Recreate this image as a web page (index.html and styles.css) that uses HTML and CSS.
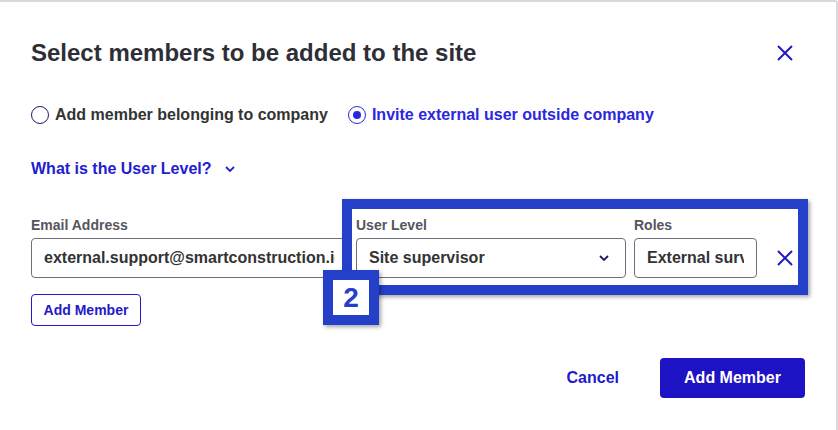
FILE: index.html
```html
<!DOCTYPE html>
<html lang="en">
<head>
    <meta charset="UTF-8">
    <meta name="viewport" content="width=device-width, initial-scale=1.0">
    <title>Select members</title>
    <link rel="stylesheet" href="styles.css">
</head>
<body>
    <div class="dialog">
        <!-- header -->
        <div class="dialog-header">
            <h2 class="dialog-title">Select members to be added to the site</h2>
            <button class="icon-btn" aria-label="Close">
                <svg width="16" height="16" viewBox="0 0 16 16"><path d="M1 1L15 15M15 1L1 15" stroke="currentColor" stroke-width="2" fill="none"/></svg>
            </button>
        </div>

        <!-- member type -->
        <div class="radio-group">
            <label class="radio"><span class="radio-mark"></span>Add member belonging to company</label>
            <label class="radio radio-checked"><span class="radio-mark"></span>Invite external user outside company</label>
        </div>

        <button class="level-link">What is the User Level?
            <svg width="10" height="6" viewBox="0 0 10 6"><path d="M1 1L5 5L9 1" stroke="currentColor" stroke-width="1.8" fill="none"/></svg>
        </button>

        <!-- member row -->
        <div class="member-row">
            <div class="field field-email">
                <div class="field-label">Email Address</div>
                <div class="input"><span class="input-text">external.support@smartconstruction.io</span></div>
            </div>
            <div class="field field-level">
                <div class="field-label">User Level</div>
                <div class="input input-select">
                    <span class="input-text">Site supervisor</span>
                    <svg width="10" height="6" viewBox="0 0 10 6"><path d="M1 1L5 5L9 1" stroke="currentColor" stroke-width="1.8" fill="none"/></svg>
                </div>
            </div>
            <div class="field field-roles">
                <div class="field-label">Roles</div>
                <div class="input"><span class="input-text">External surveyor</span></div>
            </div>
            <button class="icon-btn" aria-label="Remove">
                <svg width="16" height="16" viewBox="0 0 16 16"><path d="M1 1L15 15M15 1L1 15" stroke="currentColor" stroke-width="2" fill="none"/></svg>
            </button>
        </div>

        <button class="btn-outline">Add Member</button>

        <!-- footer -->
        <div class="dialog-footer">
            <button class="btn-text">Cancel</button>
            <button class="btn-primary">Add Member</button>
        </div>

        <!-- annotation -->
        <div class="callout"></div>
        <div class="callout-badge">2</div>
    </div>
</body>
</html>
```

FILE: styles.css
```css
/* base */
body {
    margin: 0;
    background: #fff;
    font-family: "Liberation Sans", Arial, sans-serif;
    font-weight: bold;
    color: #333;
}

button {
    font-family: inherit;
    font-weight: bold;
    background: none;
    border: none;
    padding: 0;
    cursor: pointer;
}

/* dialog */
.dialog {
    position: relative;
    box-sizing: border-box;
    width: 838px;
    height: 430px;
    border-top: 2px solid #d9d9dc;
    border-right: 2px solid #d9d9dc;
    border-top-right-radius: 3px;
    padding: 37px 31px 0 31px;
}

.dialog-header {
    display: flex;
    align-items: center;
    justify-content: space-between;
    height: 28px;
}

.dialog-title {
    margin: 0;
    font-size: 24px;
    line-height: 28px;
    color: #2e2e36;
}

.icon-btn {
    display: flex;
    align-items: center;
    justify-content: center;
    flex-shrink: 0;
    width: 40px;
    height: 40px;
    color: #2219c8;
}

/* radios */
.radio-group {
    display: flex;
    align-items: center;
    margin-top: 38px;
    height: 20px;
    font-size: 16px;
    line-height: 20px;
}

.radio {
    display: flex;
    align-items: center;
    gap: 6px;
    margin-right: 20px;
    color: #333;
}

.radio-mark {
    box-sizing: border-box;
    width: 18px;
    height: 18px;
    border: 1.5px solid #1f1b6e;
    border-radius: 50%;
    display: flex;
    align-items: center;
    justify-content: center;
}

.radio-checked {
    color: #2b27e0;
}

.radio-checked .radio-mark {
    border-color: #2b27e0;
}

.radio-checked .radio-mark::after {
    content: "";
    width: 8px;
    height: 8px;
    border-radius: 50%;
    background: #2b27e0;
}

/* link */
.level-link {
    display: flex;
    align-items: center;
    margin-top: 34px;
    font-size: 16px;
    line-height: 20px;
    color: #2220cf;
}

.level-link svg {
    margin-left: 13px;
}

/* member row */
.member-row {
    display: flex;
    align-items: flex-end;
    gap: 8px;
    margin-top: 37px;
}

.field {
    flex-shrink: 0;
}

.field-label {
    font-size: 14px;
    line-height: 18px;
    color: #55555f;
    margin-bottom: 4px;
}

.input {
    box-sizing: border-box;
    display: flex;
    align-items: center;
    height: 40px;
    padding: 0 12px;
    border: 1px solid #6f6f7d;
    border-radius: 4px;
    font-size: 16px;
    color: #333;
    background: #fff;
}

.input-text {
    flex: 1;
    overflow: hidden;
    white-space: nowrap;
}

.field-email {
    width: 317px;
}

.field-level {
    width: 270px;
}

.field-roles {
    width: 123px;
}

.input-select {
    padding-right: 16px;
}

.input-select svg {
    color: #1d1d5c;
}

/* buttons */
.btn-outline {
    margin-top: 16px;
    box-sizing: border-box;
    width: 110px;
    height: 32px;
    border: 1px solid #2219c8;
    border-radius: 4px;
    font-size: 14px;
    color: #2219c8;
}

.dialog-footer {
    display: flex;
    justify-content: flex-end;
    align-items: center;
    gap: 21px;
    margin-top: 32px;
}

.btn-text {
    height: 40px;
    padding: 0 20px;
    font-size: 16px;
    color: #2219c8;
}

.btn-primary {
    width: 145px;
    height: 40px;
    border-radius: 4px;
    background: #1d12c4;
    color: #fff;
    font-size: 16px;
}

/* annotation overlay */
.callout {
    position: absolute;
    left: 342px;
    top: 197px;
    width: 466px;
    height: 96px;
    box-sizing: border-box;
    border: 10px solid #2540c8;
    box-shadow: 2px 2px 4px rgba(0, 0, 0, 0.35);
}

.callout-badge {
    position: absolute;
    left: 323px;
    top: 268px;
    width: 56px;
    height: 55px;
    box-sizing: border-box;
    border: 10px solid #2540c8;
    background: #fff;
    box-shadow: 2px 2px 4px rgba(0, 0, 0, 0.35);
    display: flex;
    align-items: center;
    justify-content: center;
    font-size: 28px;
    color: #2540c8;
}
```
